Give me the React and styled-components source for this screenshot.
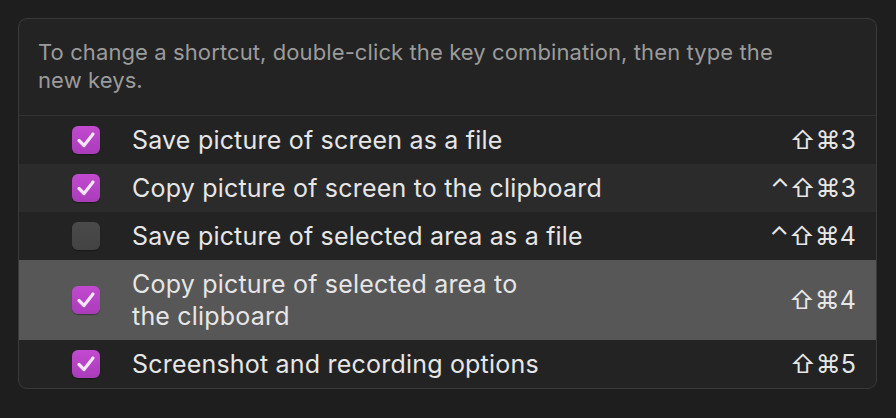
import React from "react";
import styled, { createGlobalStyle } from "styled-components";

const GlobalStyle = createGlobalStyle`
  body {
    margin: 0;
    padding: 0;
    background: #1e1e1e;
    font-family: Inter, "Noto Sans", "DejaVu Sans", sans-serif;
  }
`;

const Page = styled.div`
  padding: 18px 19px 30px 18px;
  width: 896px;
  height: 418px;
  box-sizing: border-box;
`;

const Panel = styled.div`
  background: #232323;
  border: 1px solid #3a3a3a;
  border-radius: 9px;
  overflow: hidden;
`;

const Hint = styled.p`
  margin: 0;
  padding: 19px 20px 21px 19px;
  color: #9b9b9b;
  font-size: 22px;
  letter-spacing: 0.1px;
  line-height: 28px;
  border-bottom: 1px solid #333;
`;

const Row = styled.div`
  display: flex;
  align-items: center;
  height: ${(p) => (p.$tall ? "80px" : "48px")};
  padding: 0 20px 0 53px;
  background: ${(p) => (p.$active ? "#575757" : p.$alt ? "#2b2b2b" : "transparent")};
`;

const Box = styled.span`
  width: 28px;
  height: 28px;
  border-radius: 6px;
  flex-shrink: 0;
  display: flex;
  align-items: center;
  justify-content: center;
  background: ${(p) =>
    p.$checked
      ? "linear-gradient(#c24ad0, #a93cb9)"
      : "linear-gradient(#4a4a4a, #434343)"};
  box-shadow: 0 1px 1px rgba(0, 0, 0, 0.35);
`;

const Label = styled.span`
  flex: 1;
  margin-left: 32px;
  color: #e6e6e6;
  font-size: 25px;
  letter-spacing: 0.2px;
  line-height: 32px;
`;

const Keys = styled.span`
  color: #e6e6e6;
  font-size: 25px;
  font-family: Inter, "DejaVu Sans", sans-serif;
`;

const Check = () => (
  <svg width="20" height="18" viewBox="0 0 20 18">
    <path
      d="M3 9.5 L8 14.5 L17 3"
      fill="none"
      stroke="#f6e4f8"
      strokeWidth="3.2"
      strokeLinecap="round"
      strokeLinejoin="round"
    />
  </svg>
);

const items = [
  { label: "Save picture of screen as a file", keys: "⇧⌘3", checked: true },
  { label: "Copy picture of screen to the clipboard", keys: "⌃⇧⌘3", checked: true, alt: true },
  { label: "Save picture of selected area as a file", keys: "⌃⇧⌘4", checked: false },
  {
    label: (
      <>
        Copy picture of selected area to
        <br />
        the clipboard
      </>
    ),
    keys: "⇧⌘4",
    checked: true,
    tall: true,
    active: true,
  },
  { label: "Screenshot and recording options", keys: "⇧⌘5", checked: true },
];

export default function App() {
  return (
    <Page>
      <GlobalStyle />
      <Panel>
        <Hint>
          To change a shortcut, double-click the key combination, then type the
          <br />
          new keys.
        </Hint>
        {items.map((it, i) => (
          <Row key={i} $alt={it.alt} $tall={it.tall} $active={it.active}>
            <Box $checked={it.checked}>{it.checked && <Check />}</Box>
            <Label>{it.label}</Label>
            <Keys>{it.keys}</Keys>
          </Row>
        ))}
      </Panel>
    </Page>
  );
}
